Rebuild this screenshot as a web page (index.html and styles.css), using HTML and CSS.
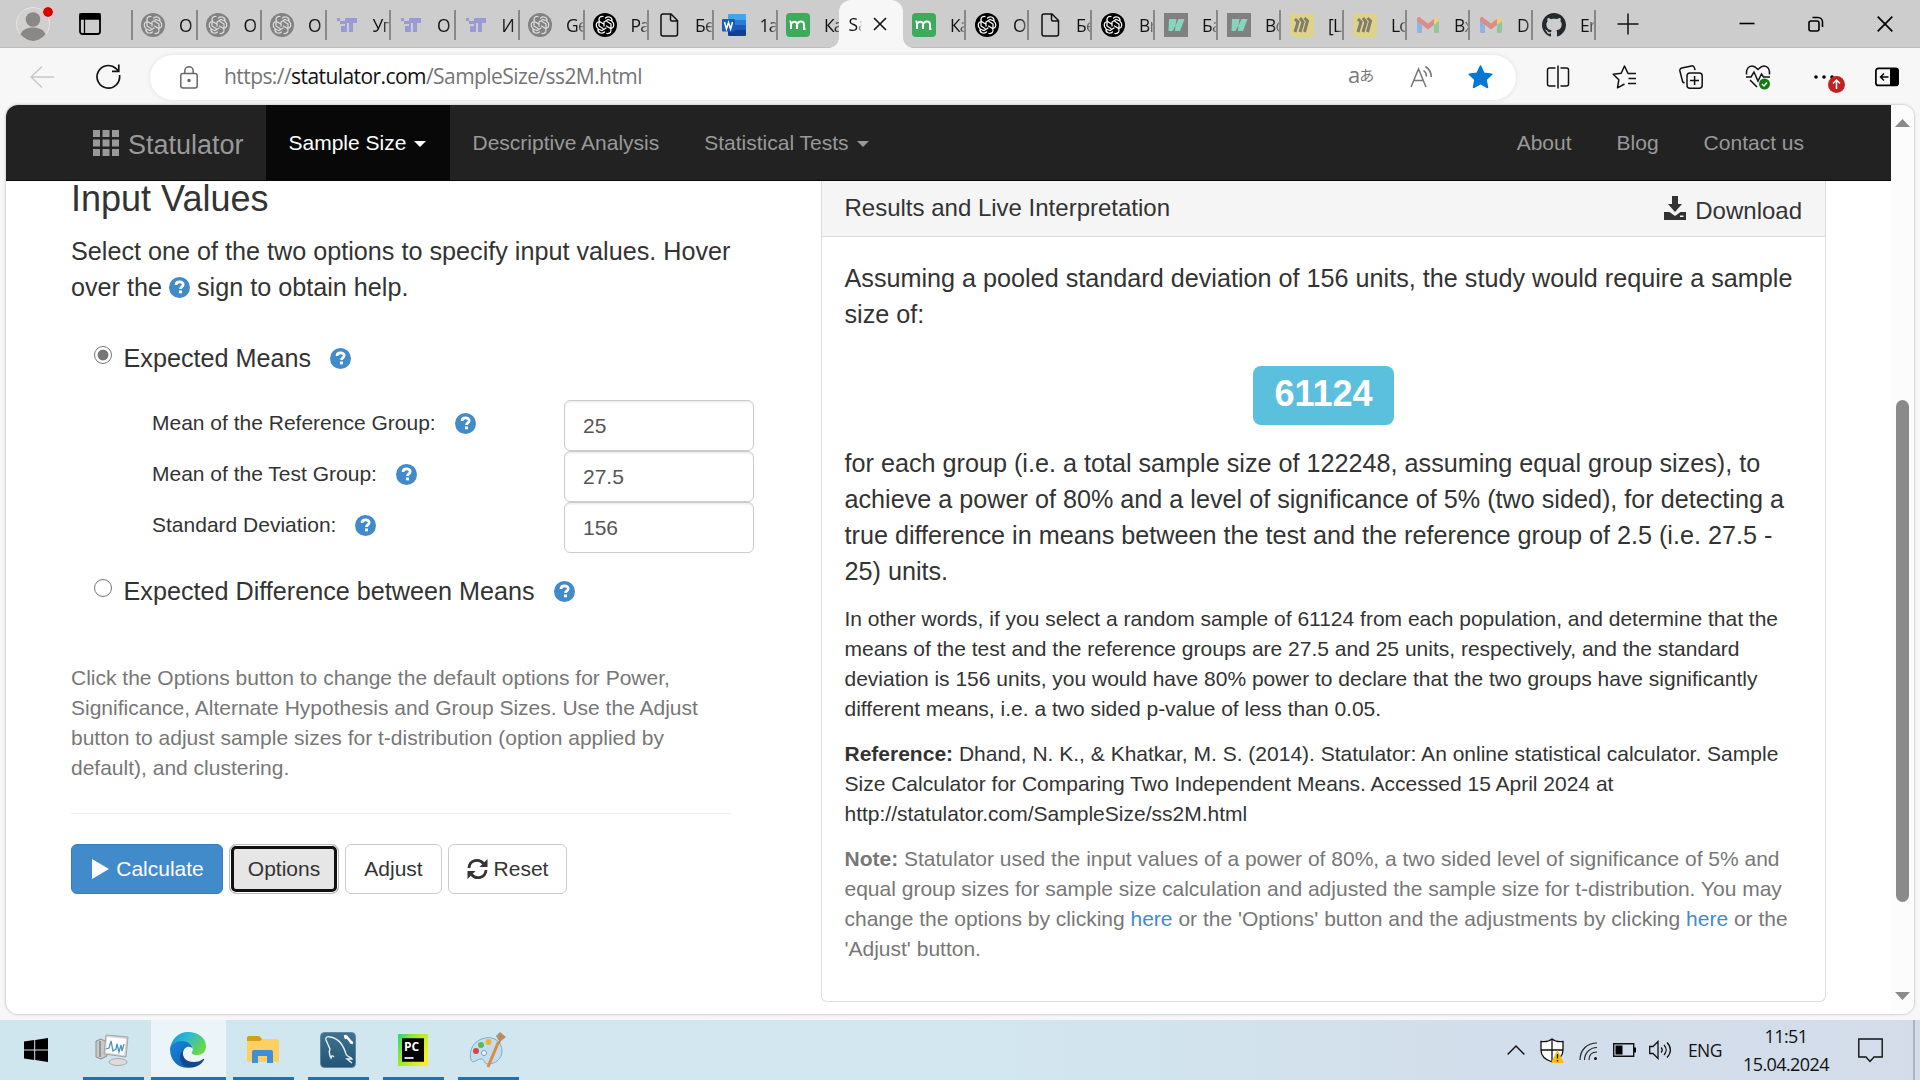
FILE: index.html
```html
<!DOCTYPE html>
<html lang="en">
<head>
<meta charset="utf-8">
<title>Statulator</title>
<link rel="stylesheet" href="styles.css">
</head>
<body>
<svg class="defs" width="0" height="0">
  <defs>
    <symbol id="knot" viewBox="0 0 24 24">
      <circle cx="12" cy="12" r="12" fill="currentColor"/>
      <g fill="none" stroke="var(--line,#fff)" stroke-width="1.25" stroke-linecap="round">
        <path d="M10 3.5C6.500 3 5 6 6.600 8.500l4 2.500M12.500 5c3-2.500 7-.5 6.500 3l-4-1.500-4 2.500v4M19 8.500c3 2 2 6.500-1 7v-4.500l-4-2.500M14 20.500c3.500.5 5-2.500 3.500-5l-4-2.500M11.500 19c-3 2.500-7 .5-6.500-3l4 1.500 4-2.500M5 15.500c-3-2-2-6.500 1-7V13l4 2.500"/>
      </g>
    </symbol>
    <symbol id="it" viewBox="0 0 24 24"><path d="M2 5h3v3H2zM5 8h3v3H5zM8 8h2v3H8zM10 5h12v5h-4v9h-4v-9h-2v9H6v-6h4z" fill="#9a9bd6"/></symbol>
    <symbol id="file" viewBox="0 0 24 24"><path d="M6 1h8l6.500 6.500V21a2 2 0 0 1-2 2H6a2 2 0 0 1-2-2V3a2 2 0 0 1 2-2zM13.500 1v5.500a1.500 1.500 0 0 0 1.500 1.500h5.500" fill="none" stroke="#111" stroke-width="1.500"/></symbol>
    <symbol id="word" viewBox="0 0 24 24"><path d="M7 1h16a1 1 0 0 1 1 1v5H6V2a1 1 0 0 1 1-1z" fill="#41a5ee"/><path d="M6 7h18v5H6z" fill="#2b7cd3"/><path d="M6 12h18v5H6z" fill="#185abd"/><path d="M6 17h18v5a1 1 0 0 1-1 1H7a1 1 0 0 1-1-1z" fill="#103f91"/><rect y="6" width="13" height="12.500" rx="1" fill="#185abd"/><path d="M2.500 9l1.900 7 2.100-6.500L8.600 16l1.900-7" fill="none" stroke="#fff" stroke-width="1.500"/></symbol>
    <symbol id="miro" viewBox="0 0 24 24"><rect width="24" height="24" rx="4" fill="#3daa5c"/><path d="M5 16V8.500M5 11c1-2.500 6-3.500 6 .5V16M11 11.500C12 8 18 7 18 11.500V16h1.500M3.500 8.500H5" fill="none" stroke="#fff" stroke-width="2"/></symbol>
    <symbol id="wave" viewBox="0 0 24 24"><path d="M0 0h24v24H0z" fill="#808080"/><path d="M4.500 18L5 6h7.500l-1 6.500L14.500 6H20.500l-4.500 12H11l.5-5.500L8.500 18z" fill="#83d6bb"/></symbol>
    <symbol id="board" viewBox="0 0 24 24"><rect width="24" height="24" rx="4" fill="#dfd28a"/><path d="M5 6l3 3-3 10M10 5l3 4-3 10M14.500 5l3 3-3 11" fill="none" stroke="#827d6b" stroke-width="3"/></symbol>
    <symbol id="gmail" viewBox="0 0 24 24"><path d="M1 7l5 4v9H2.500A1.500 1.500 0 0 1 1 18.500z" fill="#92b1e4"/><path d="M23 7l-5 4v9h3.500a1.500 1.500 0 0 0 1.500-1.500z" fill="#90c79d"/><path d="M18 6l2-1.500c1.500-1 3 0 3 1.500v2l-5 4z" fill="#e9d27c"/><path d="M1 8V6c0-1.500 1.500-2.500 3-1.500l8 6 6-4.500v6l-6 4.500z" fill="#dd8c87"/></symbol>
    <symbol id="github" viewBox="0 0 16 16"><path fill="#24292e" d="M8 0C3.580 0 0 3.580 0 8c0 3.540 2.290 6.530 5.470 7.590.4.070.55-.17.55-.38 0-.19-.01-.82-.01-1.490-2.010.37-2.530-.49-2.690-.94-.09-.23-.48-.94-.82-1.130-.28-.15-.68-.52-.01-.53.63-.01 1.080.58 1.230.82.720 1.210 1.870.87 2.330.66.070-.52.28-.87.51-1.070-1.780-.2-3.640-.89-3.640-3.950 0-.87.31-1.590.82-2.150-.08-.2-.36-1.020.08-2.120 0 0 .67-.21 2.200.82.640-.18 1.320-.27 2-.27s1.360.09 2 .27c1.530-1.040 2.200-.82 2.200-.82.44 1.100.16 1.920.08 2.120.51.56.82 1.270.82 2.150 0 3.070-1.870 3.750-3.650 3.950.29.25.54.73.54 1.480 0 1.070-.01 1.930-.01 2.200 0 .21.15.46.55.38A8.010 8.010 0 0 0 16 8c0-4.420-3.580-8-8-8z"/></symbol>
    <symbol id="help" viewBox="0 0 21 21"><circle cx="10.500" cy="10.500" r="10.500" fill="#428bca"/><path d="M7 8c0-4.200 7.400-4 7.200-.2-.1 2-2.700 2.200-2.700 4.200" fill="none" stroke="#fff" stroke-width="2.700"/><path d="M10 13.500h3v2.800h-3z" fill="#fff"/></symbol>
  </defs>
</svg>

<header class="tabstrip">
  <div class="profile">
    <svg width="34" height="34" viewBox="0 0 34 34"><circle cx="17" cy="17" r="16.500" fill="#d2d0ce" stroke="#e6e4e2"/><circle cx="17" cy="12.500" r="7.300" fill="#8a8886"/><path d="M4.500 27.500C7 18 27 18 29.500 27.500 22 36 12 36 4.500 27.500z" fill="#8a8886"/></svg>
    <span class="dot"></span>
  </div>
  <svg class="vtabs" width="22" height="22" viewBox="0 0 22 22"><rect x="1" y="1" width="20" height="20" rx="2.500" fill="none" stroke="#000" stroke-width="1.800"/><path d="M1 1h20v5H1zM5.500 6v15" stroke="#000" stroke-width="1.300"/></svg>
  <nav class="tabs left">
    <div class="tab"><svg class="grey"><use href="#knot"/></svg><span>О</span></div>
    <div class="tab"><svg class="grey"><use href="#knot"/></svg><span>О</span></div>
    <div class="tab"><svg class="grey"><use href="#knot"/></svg><span>О</span></div>
    <div class="tab"><svg><use href="#it"/></svg><span>Уп</span></div>
    <div class="tab"><svg><use href="#it"/></svg><span>О</span></div>
    <div class="tab"><svg><use href="#it"/></svg><span>И</span></div>
    <div class="tab"><svg class="grey"><use href="#knot"/></svg><span>Ge</span></div>
    <div class="tab"><svg><use href="#knot"/></svg><span>Pa</span></div>
    <div class="tab"><svg><use href="#file"/></svg><span>Бе</span></div>
    <div class="tab"><svg><use href="#word"/></svg><span>1а</span></div>
    <div class="tab"><svg><use href="#miro"/></svg><span>Ка</span></div>
  </nav>
  <div class="tab-active"><span>Sa</span><svg width="14" height="14" viewBox="0 0 14 14"><path d="M1 1l12 12M13 1L1 13" stroke="#111" stroke-width="1.600"/></svg></div>
  <nav class="tabs right">
    <div class="tab"><svg><use href="#miro"/></svg><span>Ка</span></div>
    <div class="tab"><svg><use href="#knot"/></svg><span>О</span></div>
    <div class="tab"><svg><use href="#file"/></svg><span>Бе</span></div>
    <div class="tab"><svg><use href="#knot"/></svg><span>Вr</span></div>
    <div class="tab"><svg><use href="#wave"/></svg><span>Ба</span></div>
    <div class="tab"><svg><use href="#wave"/></svg><span>Во</span></div>
    <div class="tab"><svg><use href="#board"/></svg><span>[L</span></div>
    <div class="tab"><svg><use href="#board"/></svg><span>Lo</span></div>
    <div class="tab"><svg><use href="#gmail"/></svg><span>Вх</span></div>
    <div class="tab"><svg><use href="#gmail"/></svg><span>D</span></div>
    <div class="tab"><svg><use href="#github"/></svg><span>Er</span></div>
  </nav>
  <svg class="newtab" width="22" height="22" viewBox="0 0 22 22"><path d="M11 .5v21M.5 11h21" stroke="#111" stroke-width="1.500"/></svg>
  <div class="winctl">
    <svg width="16" height="16" viewBox="0 0 16 16"><path d="M.5 7.500h15" stroke="#000" stroke-width="1.600"/></svg>
    <svg width="16" height="16" viewBox="0 0 16 16" fill="none" stroke="#000" stroke-width="1.600"><rect x="1" y="5" width="10" height="10" rx="2"/><path d="M4.500 1.500H10a4.500 4.500 0 0 1 4.500 4.500v5"/></svg>
    <svg width="16" height="16" viewBox="0 0 16 16"><path d="M.7.7l14.600 14.600M15.300.7L.7 15.300" stroke="#000" stroke-width="1.700"/></svg>
  </div>
</header>

<div class="toolbar">
  <svg class="back" width="24" height="24" viewBox="0 0 24 24"><path d="M24 12H1M12 1.500L1 12l11 10.500" fill="none" stroke="#c8c8c8" stroke-width="1.500"/></svg>
  <svg class="reload" width="25" height="25" viewBox="0 0 25 25"><path d="M23.500 11a11.300 11.300 0 1 1-3.500-6.500l2.500 2.500M22.800.5V7.300H16" fill="none" stroke="#111" stroke-width="1.700"/></svg>
  <div class="address">
    <svg width="18" height="23" viewBox="0 0 18 23" fill="none" stroke="#666" stroke-width="1.500"><rect x=".8" y="7.500" width="16.400" height="14.500" rx="2.200"/><path d="M4.800 7.500V5a4.200 4.200 0 0 1 8.400 0v2.500"/><circle cx="9" cy="14.500" r="1" fill="#666"/></svg>
    <span class="url">https://<b>statulator.com</b>/SampleSize/ss2M.html</span>
    <span class="translate">a<i>あ</i></span>
    <svg class="read" width="24" height="24" viewBox="0 0 24 24" fill="none" stroke="#777" stroke-width="1.500"><path d="M1 22L8.500 4 16 22M3.700 15.500h9.500M13.500 5.500c2.200 1.500 3 3.500 3 6M15.300 1.500c4 2.500 6 6 6 10.500"/></svg>
    <svg class="fav" width="25" height="24" viewBox="0 0 25 24"><path d="M12.500 1l3.400 7.200 7.900 1-5.800 5.500 1.500 7.800-7-3.800-7 3.800L7 14.700 1.200 9.200l7.900-1z" fill="#0078d4" stroke="#0078d4" stroke-width="1.500" stroke-linejoin="round"/></svg>
  </div>
  <div class="actions">
    <svg width="24" height="24" viewBox="0 0 24 24" fill="none" stroke="#111" stroke-width="1.500"><path d="M9.500 3H3.500a2 2 0 0 0-2 2v14a2 2 0 0 0 2 2h6M14.500 3h6a2 2 0 0 1 2 2v14a2 2 0 0 1-2 2h-6M12 .5v23"/></svg>
    <svg width="25" height="24" viewBox="0 0 25 24" fill="none" stroke="#111" stroke-width="1.500" stroke-linejoin="round"><path d="M24 8.500h-8L12.500 1 9.200 8.200l-8 1 5.600 5.600-1.300 8 7-3.800M16.500 13.500H24M16 18.500h8"/></svg>
    <svg width="24" height="24" viewBox="0 0 24 24" fill="none" stroke="#111" stroke-width="1.500"><rect x="8" y="8" width="15.200" height="15.200" rx="3"/><path d="M15.600 11v9M11 15.600h9M5.500 18L3.700 17 .9 6a2.500 2.500 0 0 1 1.900-3L12.500.9a2.500 2.500 0 0 1 3 2l.5 2.300"/></svg>
    <svg width="26" height="26" viewBox="0 0 26 26" fill="none" stroke="#111" stroke-width="1.500"><path d="M1.500 10.500C1 5 3.500 2 7 2c3 0 4.500 2 6 3.500C14.500 4 16 2 19 2c3.500 0 6 3 5.500 8.500M1 13h5l3-5 4 9 3.500-7 2 3H25M5 16l7 7"/><circle cx="19.500" cy="20" r="5.500" fill="#107c10" stroke="none"/><path d="M17 20l2 2 3-3.500" stroke="#fff"/></svg>
    <div class="more"><svg width="20" height="6" viewBox="0 0 20 6"><circle cx="2" cy="3" r="1.800"/><circle cx="10" cy="3" r="1.800"/><circle cx="18" cy="3" r="1.800"/></svg><svg class="upd" width="17" height="17" viewBox="0 0 17 17"><circle cx="8.500" cy="8.500" r="8.500" fill="#c42020"/><path d="M8.500 13V4.500M5 7.500L8.500 4 12 7.500" fill="none" stroke="#fff" stroke-width="1.500"/></svg></div>
    <svg class="side" width="24" height="20" viewBox="0 0 24 20"><rect x=".9" y="1.400" width="22.200" height="17" rx="2.500" fill="none" stroke="#000" stroke-width="1.700"/><path d="M15 1h6a2.500 2.500 0 0 1 2.500 2.500v13A2.500 2.500 0 0 1 21 19h-6z"/><path d="M13.500 10H5.500M9 6.500L5.500 10 9 13.500" fill="none" stroke="#000" stroke-width="1.400"/></svg>
  </div>
</div>

<div class="frame">
  <main class="page">
    <nav class="navbar">
      <div class="brand"><svg width="26" height="26" viewBox="0 0 26 26"><path d="M0 0h7v7H0zM9.500 0h7v7h-7zM19 0h7v7h-7zM0 9.500h7v7H0zM9.500 9.500h7v7h-7zM19 9.500h7v7h-7zM0 19h7v7H0zM9.500 19h7v7h-7zM19 19h7v7h-7z" fill="#999"/></svg><span>Statulator</span></div>
      <div class="nav-item on">Sample Size<i class="caret"></i></div>
      <div class="nav-item">Descriptive Analysis</div>
      <div class="nav-item">Statistical Tests<i class="caret"></i></div>
      <div class="nav-item push">About</div>
      <div class="nav-item">Blog</div>
      <div class="nav-item last">Contact us</div>
    </nav>
    <div class="columns">
      <section class="inputs">
        <h1>Input Values</h1>
        <p class="lead">Select one of the two options to specify input values. Hover<br>over the <svg class="help"><use href="#help"/></svg> sign to obtain help.</p>
        <div class="option"><span class="radio checked"></span>Expected Means<svg class="help"><use href="#help"/></svg></div>
        <div class="fields">
          <div class="field"><label>Mean of the Reference Group:</label><svg class="help"><use href="#help"/></svg><div class="box">25</div></div>
          <div class="field"><label>Mean of the Test Group:</label><svg class="help"><use href="#help"/></svg><div class="box">27.5</div></div>
          <div class="field"><label>Standard Deviation:</label><svg class="help"><use href="#help"/></svg><div class="box">156</div></div>
        </div>
        <div class="option second"><span class="radio"></span>Expected Difference between Means<svg class="help"><use href="#help"/></svg></div>
        <p class="hint">Click the Options button to change the default options for Power,<br>Significance, Alternate Hypothesis and Group Sizes. Use the Adjust<br>button to adjust sample sizes for t-distribution (option applied by<br>default), and clustering.</p>
        <div class="rule"></div>
        <div class="buttons">
          <div class="btn primary"><svg width="17" height="20" viewBox="0 0 17 20"><path d="M0 0l17 10L0 20z" fill="#fff"/></svg>Calculate</div>
          <div class="btn focused">Options</div>
          <div class="btn adjust">Adjust</div>
          <div class="btn reset"><svg width="21" height="22" viewBox="0 0 21 22"><path d="M2 10C2.500 2 12 0 16.500 5.500M19 12c-.5 8-10 10-14.500 4.500" fill="none" stroke="#333" stroke-width="2.800"/><path d="M20.500 1v8h-8zM.5 21v-8h8z" fill="#333"/></svg>Reset</div>
        </div>
      </section>
      <section class="panel">
        <div class="panel-head"><span>Results and Live Interpretation</span><span class="download"><svg width="22" height="24" viewBox="0 0 22 24"><path d="M8 0h6v8h4l-7 8-7-8h4z" fill="#333"/><path d="M0 16h5.500l5.500 4 5.500-4H22v8H0zm16 3.500V21h3.500v-1.500z" fill="#333" fill-rule="evenodd"/></svg>Download</span></div>
        <div class="panel-body">
          <p class="big">Assuming a pooled standard deviation of 156 units, the study would require a sample<br>size of:</p>
          <div class="badge">61124</div>
          <p class="big">for each group (i.e. a total sample size of 122248, assuming equal group sizes), to<br>achieve a power of 80% and a level of significance of 5% (two sided), for detecting a<br>true difference in means between the test and the reference group of 2.5 (i.e. 27.5 -<br>25) units.</p>
          <p>In other words, if you select a random sample of 61124 from each population, and determine that the<br>means of the test and the reference groups are 27.5 and 25 units, respectively, and the standard<br>deviation is 156 units, you would have 80% power to declare that the two groups have significantly<br>different means, i.e. a two sided p-value of less than 0.05.</p>
          <p><b>Reference:</b> Dhand, N. K., &amp; Khatkar, M. S. (2014). Statulator: An online statistical calculator. Sample<br>Size Calculator for Comparing Two Independent Means. Accessed 15 April 2024 at<br>http://statulator.com/SampleSize/ss2M.html</p>
          <p class="muted"><b>Note:</b> Statulator used the input values of a power of 80%, a two sided level of significance of 5% and<br>equal group sizes for sample size calculation and adjusted the sample size for t-distribution. You may<br>change the options by clicking <a>here</a> or the 'Options' button and the adjustments by clicking <a>here</a> or the<br>'Adjust' button.</p>
        </div>
      </section>
    </div>
  </main>
  <aside class="scroll">
    <svg width="15" height="8" viewBox="0 0 15 8"><path d="M7.500 0L15 8H0z" fill="#8a8a8a"/></svg>
    <div class="thumb"></div>
    <svg width="15" height="8" viewBox="0 0 15 8"><path d="M7.500 8L15 0H0z" fill="#8a8a8a"/></svg>
  </aside>
</div>

<footer class="taskbar">
  <div class="start"><svg width="24" height="24" viewBox="0 0 24 24"><path d="M0 3.500l10.200-1.400v9.400H0zM11.200 2L24 0v11.500H11.200zM0 12.500h10.200v9.400L0 20.500zM11.200 12.500H24V24l-12.800-2z"/></svg></div>
  <div class="task"><svg width="36" height="34" viewBox="0 0 36 34"><path d="M1 8l5-2 6 3v14l-6 3-5-2z" fill="#c9c9c9" stroke="#8f8f8f"/><path d="M5 8v16" stroke="#666"/><path d="M11 2l22 2-2 20-22-3z" fill="#d6d6d6" stroke="#a5a5a5"/><path d="M12 4l19 2-2 16-18-2.500z" fill="#fff"/><path d="M11 16l3-1 2-7 2 10 3-2 1-5 2 8 2-7 1 6 2-7" fill="none" stroke="#4b93c4" stroke-width="1.300"/><ellipse cx="23" cy="29" rx="9" ry="3.500" fill="#dcdcdc" stroke="#aaa"/></svg></div>
  <div class="task active"><svg width="36" height="36" viewBox="0 0 36 36"><defs><linearGradient id="e1" x1="0" y1="0" x2="1" y2=".5"><stop offset="0" stop-color="#1b8fd8"/><stop offset=".5" stop-color="#2bbcd0"/><stop offset="1" stop-color="#68d845"/></linearGradient><linearGradient id="e2" x1="0" y1="0" x2=".7" y2="1"><stop offset="0" stop-color="#1b84d8"/><stop offset="1" stop-color="#0f63b5"/></linearGradient></defs><path d="M0 17C1 7 9 0 18 0c10 0 18 6 18 14 0 6-4 9-9 9-4 0-6-1.500-5-3 3-5-1-9-7-9C8 11 2 13 0 17z" fill="url(#e1)"/><path d="M0 17c1-5 6-8 12-8 5 0 10 3 11 8-3-4-9-2-10 3-1 8 6 14 14 13C15 40 0 33 0 17z" fill="url(#e2)"/><path d="M13 20c-1 6 4 10 11 10 4 0 7-1 9-3 1-.5 1.500.5 1 1C29 36 20 37 15 34 9 30 8 22 15 16c-1 1-2 2-2 4z" fill="#134a8f"/></svg></div>
  <div class="task"><svg width="32" height="28" viewBox="0 0 32 28"><path d="M0 2a2 2 0 0 1 2-2h10l3 3v4H0z" fill="#d99c14"/><path d="M0 5h13l3-2h14a2 2 0 0 1 2 2v19a2 2 0 0 1-2 2H2a2 2 0 0 1-2-2z" fill="#fdd05f"/><path d="M5 27V16a2 2 0 0 1 2-2h17a2 2 0 0 1 2 2v11h-6v-7h-9v7z" fill="#3e8fd6"/></svg></div>
  <div class="task"><svg width="36" height="36" viewBox="0 0 36 36"><defs><linearGradient id="m1" x1="0" y1="0" x2="0" y2="1"><stop offset="0" stop-color="#41718f"/><stop offset="1" stop-color="#225576"/></linearGradient></defs><rect x=".5" y=".5" width="35" height="35" rx="4" fill="url(#m1)" stroke="#61869d"/><path d="M14 25c-2-2-2-2-3 1-2-4-2-7-1-9L6 8c-1-3 2-4 4-3 8 1 13 7 16 17 1 3 5 3 6 5l-5 0 5 4" fill="none" stroke="#e8f2f7" stroke-width="1.400"/><path d="M26 4l5 6M25 3l1 4M30 10l3 1" stroke="#fff" stroke-width="2.600"/></svg></div>
  <div class="task"><svg width="30" height="32" viewBox="0 0 30 30" preserveAspectRatio="none"><defs><linearGradient id="p1" x1="0" y1="0" x2="1" y2=".6"><stop offset="0" stop-color="#21d789"/><stop offset=".35" stop-color="#8be82e"/><stop offset="1" stop-color="#f3ee28"/></linearGradient></defs><path d="M0 0h30v30H0z" fill="url(#p1)"/><path d="M4 4h22v22H4z"/><path d="M6.500 22.500h9" stroke="#fff" stroke-width="1.600"/><text x="6" y="15.500" class="pc">PC</text></svg></div>
  <div class="task"><svg width="38" height="36" viewBox="0 0 38 36"><path d="M16 6C25 4 33 10 33 19c0 8-7 13-14 13-5 0-3-6-8-5-4 1-7 5-9 1C-1 17 6 8 16 6z" fill="#c2dff1" stroke="#86a9c4"/><circle cx="7" cy="19" r="3" fill="#d9453c"/><circle cx="12" cy="13" r="3" fill="#5bb85a"/><circle cx="19.500" cy="10" r="3" fill="#f2b233"/><circle cx="15" cy="21" r="2.500" fill="#eef7fc" stroke="#7c9db8"/><path d="M29 11L19 35" stroke="#e08a3c" stroke-width="3"/><path d="M30 9l-3-5 4-4 6 5-5 4-1 3-4-1z" fill="#b98d62"/></svg></div>
  <div class="tray">
    <svg width="18" height="10" viewBox="0 0 18 10"><path d="M.6 9.500L9 1l8.400 8.500" fill="none" stroke="#111" stroke-width="1.400"/></svg>
    <svg class="shield" width="24" height="25" viewBox="0 0 24 25"><path d="M12 1c3 2.500 7 3 11 2.500V12c0 6-5 10-11 12C6 22 1 18 1 12V3.500C5 4 9 3.500 12 1z" fill="#fff" stroke="#111" stroke-width="1.300"/><path d="M12 1v23M1 12h22" stroke="#111" stroke-width="1.300"/><path d="M17.500 12L24 25H11z" fill="#fbbc12"/><path d="M17.500 16v4.500M17.500 22v1.500" stroke="#111" stroke-width="1.300"/></svg>
    <svg class="wifi" width="19" height="19" viewBox="0 0 19 19" fill="none" stroke="#222" stroke-width="1.200"><path d="M1 18C1 8 8 1 18 1M5.500 18C5.500 11 11 5.500 18 5.500M10 18c0-5 3-8 8-8"/><circle cx="16.500" cy="16.500" r="1.500" fill="#111" stroke="none"/></svg>
    <svg class="batt" width="23" height="14" viewBox="0 0 23 14"><path d="M.7.700h20v12.600h-20z" fill="none" stroke="#111" stroke-width="1.400"/><path d="M2.500 2.500h7v9h-7zM21 4.500h2v5h-2z"/></svg>
    <svg class="vol" width="23" height="20" viewBox="0 0 23 20" fill="none" stroke="#111" stroke-width="1.300"><path d="M.7 6.500H4L9 1.500v17l-5-5H.7zM12 7.500c1.500 1.500 1.500 3.500 0 5M15 5c2.800 3 2.800 7 0 10M18 2.500c4.500 4.500 4.500 10.500 0 15"/></svg>
    <span class="lang">ENG</span>
    <div class="clock"><span>11:51</span><span class="date">15.04.2024</span></div>
    <svg class="note" width="25" height="25" viewBox="0 0 25 25"><path d="M.8 1h23.400v18H16l-4 4.500L8 19H.8z" fill="none" stroke="#111" stroke-width="1.400"/></svg>
    <div class="edge"></div>
  </div>
</footer>
</body>
</html>
```
FILE: styles.css
```css
* { box-sizing: border-box; }
body {
  margin: 0; width: 1920px; height: 1080px; overflow: hidden;
  display: flex; flex-direction: column;
  background: #f7f7f7; color: #333;
  font-family: "Liberation Sans", Arial, sans-serif; font-size: 21px; line-height: 30px;
}
svg { flex: none; display: block; }
.defs { position: absolute; }
p, h1 { margin: 0; white-space: nowrap; }

/* tab strip */
.tabstrip { height: 48px; flex: none; display: flex; align-items: center; background: #cdcdcd; border-bottom: 1px solid #bdbdbd; font-family: "Open Sans", "Noto Sans", sans-serif; font-size: 17.5px; color: #111; }
.profile { position: relative; margin-left: 16px; }
.profile .dot { position: absolute; right: -3px; top: 0; width: 10px; height: 10px; border-radius: 50%; background: #d90000; outline: 1px solid #e8c4c4; }
.vtabs { margin: 0 30px 0 29px; }
.tabs { display: flex; height: 47px; align-items: center; }
.tab { display: flex; align-items: center; height: 30px; margin-top: 2px; overflow: hidden; }
.tabs.left .tab { width: 64.5px; border-left: 2px solid #888; padding-left: 8px; }
.tabs.right .tab { width: 63px; border-right: 2px solid #888; padding-left: 9px; }
.tab svg { width: 24px; height: 24px; color: #000; margin-right: 14px; }
.tab svg.grey { color: #828282; --line: #dcdcdc; }
.tab span { width: 17px; overflow: hidden; white-space: nowrap; letter-spacing: -.8px; -webkit-mask-image: linear-gradient(90deg, #000 60%, rgba(0,0,0,.35)); mask-image: linear-gradient(90deg, #000 60%, rgba(0,0,0,.35)); }
.tab-active { position: relative; display: flex; align-items: center; width: 64.5px; height: 48px; margin-left: -2px; padding-left: 10px; background: #f7f7f7; border-radius: 12px 12px 0 0; }
.tab-active::before, .tab-active::after { content: ""; position: absolute; bottom: 0; width: 10px; height: 10px; }
.tab-active::before { left: -10px; background: radial-gradient(circle at 0 0, transparent 9.5px, #f7f7f7 10px); }
.tab-active::after { right: -10px; background: radial-gradient(circle at 100% 0, transparent 9.5px, #f7f7f7 10px); }
.tab-active span { width: 13px; margin-right: 11px; overflow: hidden; -webkit-mask-image: linear-gradient(90deg, #000 60%, transparent); mask-image: linear-gradient(90deg, #000 60%, transparent); }
.newtab { margin-left: 21px; }
.winctl { display: flex; gap: 53px; margin-left: 100px; }

/* toolbar */
.toolbar { height: 57px; flex: none; display: flex; align-items: center; padding: 0 0 0 30px; }
.reload { margin: 0 29px 0 42px; }
.address { width: 1369px; height: 45px; margin-top: 1px; padding-left: 30px; display: flex; align-items: center; background: #fff; border-radius: 23px; box-shadow: 0 0 5px rgba(0,0,0,.1); }
.url { flex: none; width: 1099px; margin: -2px 26px 0; font: 21px/30px "Open Sans", "Noto Sans", sans-serif; letter-spacing: -.57px; color: #757575; white-space: nowrap; }
.url b { font-weight: 400; color: #111; }
.translate { display: flex; width: 26px; margin: -4px 36px 0 -1px; font: 22px/30px "Open Sans", "Noto Sans CJK JP", sans-serif; color: #777; }
.translate i { font: 15px/32px "Noto Sans CJK JP", sans-serif; margin-left: -1px; }
.fav { margin-left: 34px; }
.actions { display: flex; align-items: center; margin-left: 9px; }
.actions > * { margin: 0 21px; }
.more { position: relative; width: 24px; padding-left: 1px; }
.upd { position: absolute; left: 15px; top: 2px; }
.actions .side { margin-left: 17px; }

/* page */
.frame { height: 909px; margin: 0 6px; flex: none; display: flex; overflow: hidden; border-radius: 12px; background: #fff; box-shadow: 0 0 3px rgba(0,0,0,.3); }
.page { width: 1885px; }
.navbar { height: 76px; display: flex; align-items: center; background: #222; border-bottom: 1px solid #080808; color: #999; font-size: 21px; }
.brand { display: flex; align-items: center; gap: 9px; width: 260px; padding: 1px 0 0 87px; font-size: 27px; }
.brand span { padding-top: 3px; }
.nav-item { display: flex; align-items: center; height: 75px; padding: 0 22.500px; white-space: nowrap; }
.nav-item.on { background: #080808; color: #fff; width: 184px; }
.caret { margin-left: 8px; border: 6px solid transparent; border-top-color: currentColor; border-bottom: 0; margin-top: 2px; }
.push { margin-left: auto; }
.last { padding-right: 87px; }
.columns { display: flex; }
.inputs { width: 750px; padding-left: 65px; }
h1 { font-size: 36px; line-height: 40px; font-weight: 400; margin-top: -2px; }
.lead { margin-top: 14px; font-size: 25.2px; line-height: 36px; }
.help { width: 21px; height: 21px; }
.lead .help { display: inline-block; vertical-align: -2px; }
.option { display: flex; align-items: center; margin: 35px 0 0 23px; height: 36px; font-size: 25.2px; }
.option .help { margin-left: 19px; }
.option.second { margin-top: 20px; }
.radio { width: 18px; height: 18px; margin: -7px 11.500px 0 0; border: 1.500px solid #767676; border-radius: 50%; }
.radio.checked { background: radial-gradient(circle, #767676 5px, transparent 5.800px); }
.fields { margin: 24px 0 0 81px; width: 602px; }
.field { display: flex; align-items: center; height: 51px; }
.field label { margin-top: -5px; }
.field .help { margin: -5px 0 0 19px; }
.box { width: 190px; height: 51px; margin-left: auto; padding: 1px 18px 0; line-height: 48px; border: 1px solid #ccc; border-radius: 6px; color: #555; box-shadow: inset 0 1.500px 1.500px rgba(0,0,0,.075); }
.hint { margin-top: 54px; color: #777; }
.rule { width: 660px; height: 1px; margin: 30px 0; background: #eee; }
.buttons { display: flex; gap: 6px; }
.btn { display: flex; align-items: center; justify-content: center; height: 50px; padding-bottom: 1px; border: 1px solid #ccc; border-radius: 6px; background: #fff; }
.btn.primary { width: 152px; gap: 7px; padding-left: 2px; background: #428bca; border-color: #357ebd; color: #fff; }
.btn.focused { width: 110px; border-color: #bbb; border-radius: 7px; background: #e6e6e6; box-shadow: inset 0 0 0 1px #fff, inset 0 0 0 4px #111; }
.btn.adjust { width: 97px; }
.btn.reset { width: 119px; gap: 6px; }

.panel { width: 1005px; height: 821px; margin-left: 65px; border: 1px solid #ddd; border-top: 0; border-radius: 0 0 6px 6px; }
.panel-head { display: flex; justify-content: space-between; height: 56px; padding: 0 23px 0 22.500px; background: #f5f5f5; border-bottom: 1px solid #ddd; font-size: 24px; line-height: 53px; }
.download { display: flex; gap: 9px; line-height: 59px; }
.download svg { margin-top: 15px; }
.panel-body { padding: 23px 22.500px; }
.panel-body p { margin-bottom: 15px; }
.panel-body p.big { font-size: 25.200px; line-height: 36px; margin-bottom: 15px; }
.badge { width: 141px; height: 59px; margin: 34px auto 20px; border-radius: 8px; background: #5bc0de; color: #fff; font-size: 36px; font-weight: 700; line-height: 55px; text-align: center; }
.muted { color: #777; }
.muted a { color: #428bca; }

.scroll { width: 23px; padding: 14px 1px 14px 0; background: #fcfcfc; display: flex; flex-direction: column; align-items: center; }
.thumb { width: 13px; height: 502px; margin: 273px 0 auto; border-radius: 7px; background: #8a8a8a; }

/* taskbar */
.taskbar { height: 60px; margin-top: 6px; flex: none; display: flex; background: linear-gradient(90deg, #d0e6ee 0%, #d2e7ef 50%, #d2deeb 78%, #d4dcea 100%); font-family: "Open Sans", "Noto Sans", sans-serif; color: #111; }
.start { width: 76px; display: flex; align-items: center; padding-left: 24px; }
.task { width: 75px; display: flex; align-items: center; justify-content: center; padding-right: 2px; background: linear-gradient(#0f75c8, #0f75c8) no-repeat center bottom / 61px 3px; }
.task.active { background: linear-gradient(#0f75c8, #0f75c8) no-repeat center bottom / 75px 3px, #ebf4f9; }
.pc { font: 700 12px "Open Sans", sans-serif; fill: #fff; }
.tray { flex: 1; display: flex; align-items: center; justify-content: flex-end; }
.shield { margin-left: 15px; }
.wifi { margin: 2px 0 0 15px; }
.batt { margin-left: 15px; }
.vol { margin-left: 13px; }
.lang { width: 33px; margin-left: 16px; font-size: 17.500px; letter-spacing: -.6px; }
.clock { width: 88px; margin-left: 21px; display: flex; flex-direction: column; align-items: center; font-size: 18px; line-height: 28px; letter-spacing: -.6px; }
.note { margin-left: 28px; }
.edge { width: 7px; height: 60px; margin-left: 30px; border-left: 2px solid #aab3c2; }
```
